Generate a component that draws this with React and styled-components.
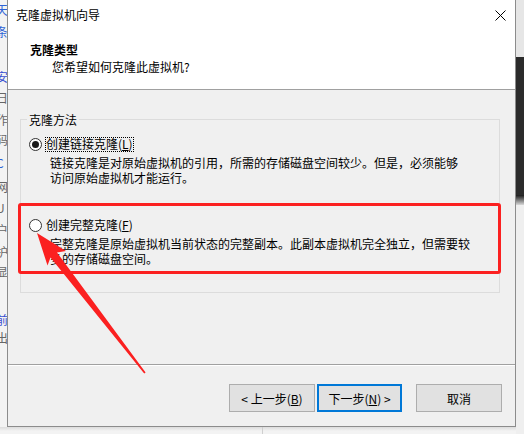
import React from 'react';
import styled, { createGlobalStyle } from 'styled-components';

const GlobalStyle = createGlobalStyle`
  * {
    box-sizing: border-box;
  }
  html,
  body {
    margin: 0;
    padding: 0;
  }
  body {
    font-family: 'Microsoft YaHei', 'Noto Sans CJK SC', sans-serif;
    font-size: 12px;
    color: #000;
    background: #f0f0f0;
  }
`;

// text of the window behind the dialog, cut by the left screen edge
const fragments = [
  { y: 10, c: '天', col: '#2d62d6' },
  { y: 32, c: '条', col: '#2d62d6' },
  { y: 77, c: '安', col: '#3a4fd0' },
  { y: 98, c: '日', col: '#666' },
  { y: 120, c: '作', col: '#666' },
  { y: 140, c: '码', col: '#666' },
  { y: 163, c: 'C', col: '#2d62d6' },
  { y: 187, c: '网', col: '#666' },
  { y: 208, c: 'U', col: '#666' },
  { y: 230, c: '户', col: '#666' },
  { y: 252, c: '护', col: '#666' },
  { y: 272, c: '显', col: '#666' },
  { y: 320, c: '前', col: '#3a4fd0' },
  { y: 338, c: '出', col: '#666' },
];

const App = () => {
  let last = 0;
  return (
    <>
      <GlobalStyle />
      <Screen>
        <LeftStrip>
          {fragments.map((f) => {
            const gap = f.y - 7 - last;
            last = f.y + 7;
            return (
              <Fragment key={f.y} $gap={gap} $color={f.col}>
                {f.c}
              </Fragment>
            );
          })}
        </LeftStrip>

        <Dialog>
          <TitleBar>
            <TitleText>克隆虚拟机向导</TitleText>
            <CloseButton>
              <svg width="11" height="11" viewBox="0 0 11 11">
                <path d="M0.5 0.5 L10.5 10.5 M10.5 0.5 L0.5 10.5" stroke="#000" strokeWidth="1" />
              </svg>
            </CloseButton>
          </TitleBar>

          <Header>
            <HeaderTitle>克隆类型</HeaderTitle>
            <HeaderSub>您希望如何克隆此虚拟机?</HeaderSub>
          </Header>

          <Body>
            <GroupBox>
              <Legend>克隆方法</Legend>

              <Option>
                <OptionRow>
                  <Radio $checked />
                  <OptionLabel $focused>
                    创建链接克隆(<Key>L</Key>)
                  </OptionLabel>
                </OptionRow>
                <Description>
                  <DescLine>链接克隆是对原始虚拟机的引用，所需的存储磁盘空间较少。但是，必须能够</DescLine>
                  <DescLine>访问原始虚拟机才能运行。</DescLine>
                </Description>
              </Option>

              <Option $marked>
                <OptionRow>
                  <Radio />
                  <OptionLabel>
                    创建完整克隆(<Key>F</Key>)
                  </OptionLabel>
                </OptionRow>
                <Description>
                  <DescLine>完整克隆是原始虚拟机当前状态的完整副本。此副本虚拟机完全独立，但需要较</DescLine>
                  <DescLine>多的存储磁盘空间。</DescLine>
                </Description>
              </Option>
            </GroupBox>
          </Body>

          <Footer>
            <Button>
              &lt; 上一步(<Key>B</Key>)
            </Button>
            <Button $default $gap={2} $w={85}>
              下一步(<Key>N</Key>) &gt;
            </Button>
            <Button $gap={14}>取消</Button>
          </Footer>
        </Dialog>

        <RightStrip>
          <Band $h={57} $bg="#e6e6e6" />
          <Band $h={138} $bg="#2b2b2b">
            <BlackBand />
          </Band>
          <Band $h={10} $bg="linear-gradient(#1a1a1a, #d8d8d8)" />
          <Band $h={0} $bg="#efefef" $grow />
        </RightStrip>

        <BottomStrip>
          <Divider />
        </BottomStrip>

        <Arrow viewBox="0 0 524 434" width="524" height="434">
          <polygon
            points="37,233 66,251 57,252.5 145.6,372.5 144.2,373.5 50.5,257.5 47.5,265.5"
            fill="#fb2020"
          />
        </Arrow>
      </Screen>
    </>
  );
};

const Screen = styled.div`
  position: relative;
  width: 524px;
  height: 434px;
  overflow: hidden;
  display: grid;
  grid-template-columns: 7px 509px 8px;
  grid-template-rows: 427px 7px;
  background: #f0f0f0;
`;

const LeftStrip = styled.div`
  grid-column: 1;
  grid-row: 1;
  display: flex;
  flex-direction: column;
  overflow: hidden;
  background: #f3f3f3;
`;

const Fragment = styled.div`
  flex: none;
  height: 14px;
  line-height: 14px;
  margin-top: ${(p) => p.$gap}px;
  margin-left: -4px;
  font-size: 12px;
  color: ${(p) => p.$color};
  white-space: nowrap;
`;

const Dialog = styled.div`
  grid-column: 2;
  grid-row: 1;
  display: flex;
  flex-direction: column;
  border: 1px solid #8c8c8c;
  border-top: none;
  background: #f0f0f0;
`;

const TitleBar = styled.div`
  height: 30px;
  display: flex;
  align-items: center;
  justify-content: space-between;
  padding-left: 8px;
  background: #fff;
`;

const TitleText = styled.div`
  font-size: 12px;
  line-height: 16px;
`;

const CloseButton = styled.div`
  width: 30px;
  height: 30px;
  display: flex;
  align-items: center;
  justify-content: center;
`;

const Header = styled.div`
  height: 60px;
  padding: 12px 0 0 22px;
  background: #fff;
  border-bottom: 1px solid #a0a0a0;
`;

const HeaderTitle = styled.div`
  font-weight: bold;
  line-height: 16px;
`;

const HeaderSub = styled.div`
  margin-top: 1px;
  padding-left: 22px;
  line-height: 16px;
`;

const Body = styled.div`
  height: 275px;
  padding: 29px 15px 0 12px;
  border-bottom: 1px solid #a0a0a0;
`;

const GroupBox = styled.div`
  border: 1px solid #dcdcdc;
  padding-bottom: 26px;
`;

const Legend = styled.div`
  width: fit-content;
  margin: -8px 0 0 6px;
  padding: 0 2px;
  line-height: 15px;
  background: #f0f0f0;
`;

const Option = styled.div`
  position: relative;
  margin-top: ${(p) => (p.$marked ? 33 : 10)}px;

  &::after {
    content: '';
    display: ${(p) => (p.$marked ? 'block' : 'none')};
    position: absolute;
    top: -15px;
    bottom: -8px;
    left: -3px;
    right: -2px;
    border: 3px solid #fb2020;
    border-radius: 3px;
    pointer-events: none;
  }
`;

const OptionRow = styled.div`
  display: flex;
  align-items: center;
  height: 15px;
  padding-left: 8px;
`;

const Radio = styled.span`
  flex: none;
  width: 13px;
  height: 13px;
  margin-right: 3px;
  border-radius: 50%;
  border: 1px solid #333;
  background: #fff;
  display: flex;
  align-items: center;
  justify-content: center;

  &::before {
    content: '';
    display: ${(p) => (p.$checked ? 'block' : 'none')};
    width: 7px;
    height: 7px;
    border-radius: 50%;
    background: #1a1a1a;
  }
`;

const OptionLabel = styled.span`
  line-height: 12px;
  padding-bottom: 1px;
  border: 1px ${(p) => (p.$focused ? 'dotted #000' : 'solid transparent')};
`;

const Key = styled.span`
  text-decoration: underline;
  text-underline-offset: 1px;
`;

const Description = styled.div`
  margin-top: 3px;
  padding-left: 29px;
`;

const DescLine = styled.div`
  line-height: 15px;
  white-space: nowrap;
`;

const Footer = styled.div`
  height: 61px;
  display: flex;
  justify-content: flex-end;
  align-items: flex-start;
  padding: 18px 13px 0 0;
  border-top: 1px solid #fff;
`;

const Button = styled.div`
  width: ${(p) => p.$w || 86}px;
  height: 28px;
  margin-left: ${(p) => p.$gap || 0}px;
  display: flex;
  align-items: center;
  justify-content: center;
  background: #e1e1e1;
  border: ${(p) => (p.$default ? '2px solid #0078d7' : '1px solid #adadad')};
  font-size: 12px;
  white-space: pre;
`;

const RightStrip = styled.div`
  grid-column: 3;
  grid-row: 1 / span 2;
  display: flex;
  flex-direction: column;
`;

const Band = styled.div`
  flex: ${(p) => (p.$grow ? '1' : 'none')};
  height: ${(p) => p.$h}px;
  background: ${(p) => p.$bg};
  position: relative;
`;

const BlackBand = styled.div`
  position: absolute;
  top: 100%;
  left: 0;
  right: 0;
  height: 162px;
  background: #030303;
  border-top-left-radius: 10px;
`;

const BottomStrip = styled.div`
  grid-column: 1 / span 2;
  grid-row: 2;
  background: linear-gradient(#dcdcdc, #f3f3f3 4px);
  display: flex;
`;

const Divider = styled.div`
  margin-left: 262px;
  width: 1px;
  background: #cfcfcf;
`;

const Arrow = styled.svg`
  position: absolute;
  left: 0;
  top: 0;
  pointer-events: none;
`;

export default App;
